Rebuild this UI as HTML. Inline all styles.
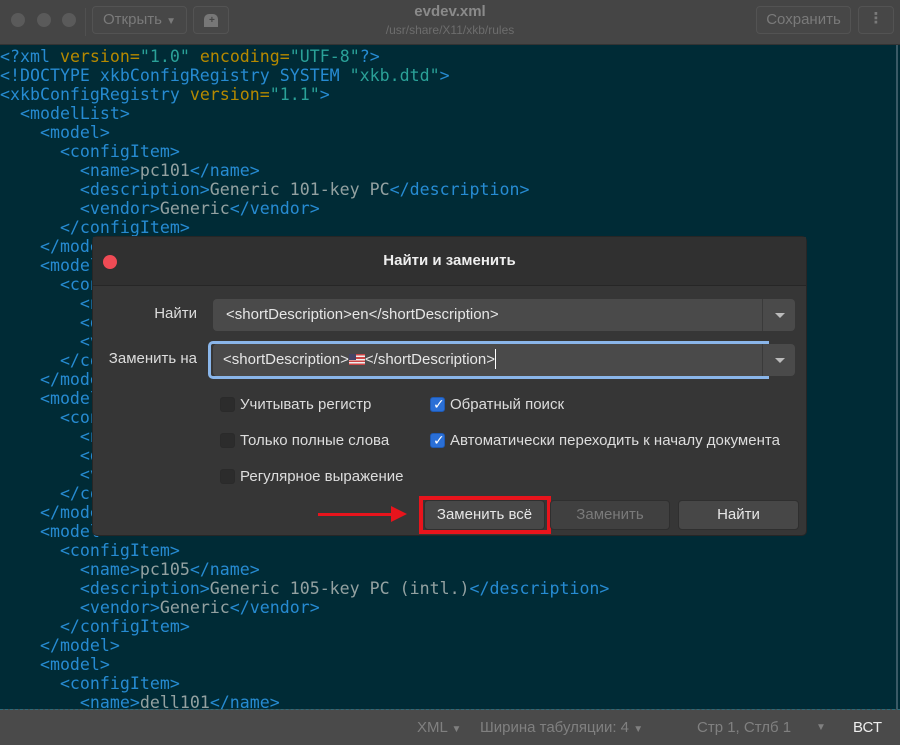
<!DOCTYPE html>
<html><head><meta charset="utf-8"><style>
*{margin:0;padding:0;box-sizing:border-box}
body{width:900px;height:745px;overflow:hidden;background:#002b36;position:relative;font-family:"Liberation Sans","DejaVu Sans",sans-serif}
.hdr{position:absolute;left:0;top:0;width:900px;height:45px;background:#454545;border-bottom:1px solid #333}
.dot{position:absolute;top:13px;width:14px;height:14px;border-radius:50%;background:#5a5a5a}
.btn{position:absolute;border:1px solid #535353;border-radius:4px;background:#474747;color:#7a7a7a;font-size:15px;text-align:center}
pre{position:absolute;left:0;top:47px;font-family:"DejaVu Sans Mono",monospace;font-size:16.6px;line-height:19px;color:#93a1a1}
.t{color:#268bd2}.a{color:#b58900}.s{color:#2aa198}
.status{position:absolute;left:0;top:709px;width:900px;height:36px;background:#4a4a4a;border-top:1px dashed #2e6a78;color:#808080;font-size:15px}
.dlg{position:absolute;left:92px;top:236px;width:715px;height:300px;background:#363636;border:1px solid #262626;border-radius:5px;color:#ddd;font-size:15px}
.dh{height:49px;background:#303030;border-bottom:1px solid #262626;text-align:center;line-height:48px;font-weight:bold;color:#eee;font-size:15px}
.lbl{position:absolute;text-align:right;color:#ddd}
.inp{position:absolute;left:120px;width:582px;height:32px;background:#4a4a4a;border-radius:4px;color:#e6e6e6;line-height:31px;padding-left:13px}
.dd{position:absolute;right:0;top:0;width:33px;height:100%;border-left:1px solid #3a3a3a}
.dd:after{content:"";position:absolute;left:12px;top:14px;border:5px solid transparent;border-top:5px solid #bbb;border-bottom:none}
.cb{position:absolute;width:15px;height:15px;border-radius:3px;background:#2c2c2c;border:1px solid #2a2a2a}
.cb.on{background:#2a6fd6;border-color:#1e5ab5}
.cb.on:after{content:"✓";position:absolute;left:2px;top:-2px;color:#fff;font-size:14px;font-weight:bold}
.ct{position:absolute;color:#ddd}
.db{position:absolute;top:263px;height:30px;background:#474747;border:1px solid #2f2f2f;border-radius:4px;text-align:center;line-height:28px;color:#e6e6e6}
</style></head><body>
<div class="hdr">
<div class="dot" style="left:11px"></div><div class="dot" style="left:37px"></div><div class="dot" style="left:62px"></div>
<div style="position:absolute;left:85px;top:8px;width:1px;height:28px;background:#505050"></div>
<div class="btn" style="left:92px;top:6px;width:95px;height:28px;line-height:26px">Открыть <span style="font-size:10px">▼</span></div>
<div class="btn" style="left:193px;top:6px;width:36px;height:28px"><div style="position:absolute;left:10px;top:7px;width:14px;height:13px;background:#777;border-radius:5px 5px 0 0"></div><div style="position:absolute;left:15px;top:10px;color:#454545;font-size:10px;font-weight:bold;line-height:8px">+</div></div>
<div style="position:absolute;left:0;width:900px;top:3px;text-align:center;color:#8a8a8a;font-weight:bold;font-size:15px">evdev.xml</div>
<div style="position:absolute;left:0;width:900px;top:23px;text-align:center;color:#6d6d6d;font-size:12px">/usr/share/X11/xkb/rules</div>
<div class="btn" style="left:756px;top:6px;width:95px;height:28px;line-height:26px">Сохранить</div>
<div class="btn" style="left:858px;top:6px;width:36px;height:28px;line-height:24px;font-weight:bold">⋮</div>
</div>
<pre><span class="t">&lt;?xml</span> <span class="a">version=</span><span class="s">"1.0"</span> <span class="a">encoding=</span><span class="s">"UTF-8"</span><span class="t">?&gt;</span>
<span class="t">&lt;!DOCTYPE xkbConfigRegistry SYSTEM </span><span class="s">"xkb.dtd"</span><span class="t">&gt;</span>
<span class="t">&lt;xkbConfigRegistry</span> <span class="a">version=</span><span class="s">"1.1"</span><span class="t">&gt;</span>
<span class="t">  &lt;modelList&gt;</span>
<span class="t">    &lt;model&gt;</span>
<span class="t">      &lt;configItem&gt;</span>
<span class="t">        &lt;name&gt;</span>pc101<span class="t">&lt;/name&gt;</span>
<span class="t">        &lt;description&gt;</span>Generic 101-key PC<span class="t">&lt;/description&gt;</span>
<span class="t">        &lt;vendor&gt;</span>Generic<span class="t">&lt;/vendor&gt;</span>
<span class="t">      &lt;/configItem&gt;</span>
<span class="t">    &lt;/model&gt;</span>
<span class="t">    &lt;model&gt;</span>
<span class="t">      &lt;configItem&gt;</span>
<span class="t">        &lt;name&gt;</span>
<span class="t">        &lt;description&gt;</span>
<span class="t">        &lt;vendor&gt;</span>
<span class="t">      &lt;/configItem&gt;</span>
<span class="t">    &lt;/model&gt;</span>
<span class="t">    &lt;model&gt;</span>
<span class="t">      &lt;configItem&gt;</span>
<span class="t">        &lt;name&gt;</span>
<span class="t">        &lt;description&gt;</span>
<span class="t">        &lt;vendor&gt;</span>
<span class="t">      &lt;/configItem&gt;</span>
<span class="t">    &lt;/model&gt;</span>
<span class="t">    &lt;model&gt;</span>
<span class="t">      &lt;configItem&gt;</span>
<span class="t">        &lt;name&gt;</span>pc105<span class="t">&lt;/name&gt;</span>
<span class="t">        &lt;description&gt;</span>Generic 105-key PC (intl.)<span class="t">&lt;/description&gt;</span>
<span class="t">        &lt;vendor&gt;</span>Generic<span class="t">&lt;/vendor&gt;</span>
<span class="t">      &lt;/configItem&gt;</span>
<span class="t">    &lt;/model&gt;</span>
<span class="t">    &lt;model&gt;</span>
<span class="t">      &lt;configItem&gt;</span>
<span class="t">        &lt;name&gt;</span>dell101<span class="t">&lt;/name&gt;</span></pre>
<div style="position:absolute;left:896px;top:45px;width:2px;height:664px;background:#3a5a66"></div>
<div class="status">
<span style="position:absolute;left:417px;top:9px">XML <span style="font-size:10px">▼</span></span>
<span style="position:absolute;left:480px;top:9px">Ширина табуляции: 4 <span style="font-size:10px">▼</span></span>
<span style="position:absolute;left:697px;top:9px">Стр 1, Cтлб 1</span>
<span style="position:absolute;left:816px;top:9px;font-size:10px;line-height:18px">▼</span>
<span style="position:absolute;left:853px;top:9px;color:#eee">ВСТ</span>
</div>
<div class="dlg">
<div class="dh">Найти и заменить</div>
<div style="position:absolute;left:10px;top:18px;width:14px;height:14px;border-radius:50%;background:#ef4b55"></div>
<div class="lbl" style="left:0;width:104px;top:68px">Найти</div>
<div class="inp" style="top:62px">&lt;shortDescription&gt;en&lt;/shortDescription&gt;<div class="dd"></div></div>
<div class="lbl" style="left:0;width:104px;top:113px">Заменить на</div>
<div style="position:absolute;left:115px;top:104px;width:561px;height:38px;border:3px solid #8ab6ea;border-right:none;border-radius:5px 0 0 5px"></div>
<div class="inp" style="top:107px;padding-left:10px">&lt;shortDescription&gt;<span style="display:inline-block;width:16px;height:11px;background:repeating-linear-gradient(#c44 0 1.6px,#eee 1.6px 3.2px);position:relative;vertical-align:-1px"><span style="position:absolute;left:0;top:0;width:7px;height:6px;background:#446"></span></span>&lt;/shortDescription&gt;<span style="display:inline-block;width:1px;height:20px;background:#fff;vertical-align:-5px"></span><div class="dd" style="height:32px"></div></div>
<div class="cb" style="left:127px;top:160px"></div><div class="ct" style="left:147px;top:159px">Учитывать регистр</div>
<div class="cb on" style="left:337px;top:160px"></div><div class="ct" style="left:357px;top:159px">Обратный поиск</div>
<div class="cb" style="left:127px;top:196px"></div><div class="ct" style="left:147px;top:195px">Только полные слова</div>
<div class="cb on" style="left:337px;top:196px"></div><div class="ct" style="left:357px;top:195px">Автоматически переходить к началу документа</div>
<div class="cb" style="left:127px;top:232px"></div><div class="ct" style="left:147px;top:231px">Регулярное выражение</div>
<div style="position:absolute;left:225px;top:276px;width:78px;height:3px;background:#e8141c"></div>
<div style="position:absolute;left:298px;top:269px;border-left:16px solid #e8141c;border-top:8px solid transparent;border-bottom:8px solid transparent"></div>
<div style="position:absolute;left:326px;top:259px;width:132px;height:38px;border:4px solid #e8141c"></div>
<div class="db" style="left:331px;width:121px">Заменить всё</div>
<div class="db" style="left:457px;width:120px;color:#7a7a7a;background:#404040">Заменить</div>
<div class="db" style="left:585px;width:121px">Найти</div>
</div>
</body></html>
